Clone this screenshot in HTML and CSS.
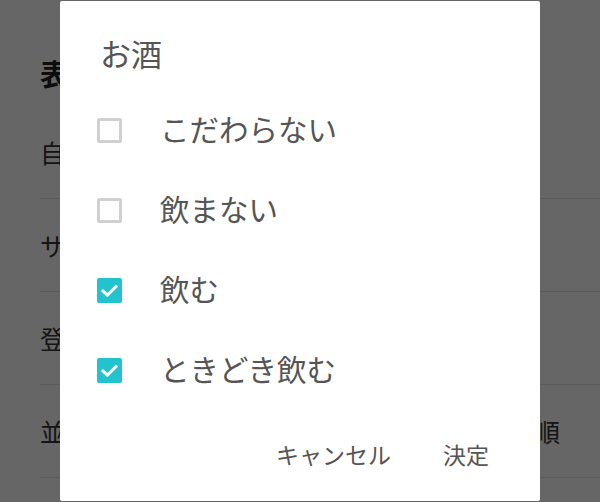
FILE: index.html
```html
<!DOCTYPE html>
<html lang="ja">
<head>
  <meta charset="UTF-8">
  <meta name="viewport" content="width=device-width, initial-scale=1.0">
  <title>お酒</title>
  <link rel="stylesheet" href="styles.css">
</head>
<body>
  <div class="page">
    <h2 class="page-title">表示</h2>
    <ul class="settings">
      <li class="setting"><span>自動ログイン</span></li>
      <li class="setting"><span>サウンド</span></li>
      <li class="setting"><span>登録情報</span></li>
      <li class="setting"><span>並び順</span><span class="value">新着順</span></li>
    </ul>
  </div>

  <div class="overlay">
    <div class="dialog">
      <h3 class="dialog-title">お酒</h3>
      <ul class="options">
        <li class="option">
          <span class="box"></span>
          <span class="label">こだわらない</span>
        </li>
        <li class="option">
          <span class="box"></span>
          <span class="label">飲まない</span>
        </li>
        <li class="option">
          <span class="box checked">
            <svg viewBox="0 0 25 25" width="25" height="25"><path d="M5.8 12.8 L10.4 17.2 L19.2 8.4" fill="none" stroke="#fff" stroke-width="3" stroke-linecap="round" stroke-linejoin="round"/></svg>
          </span>
          <span class="label">飲む</span>
        </li>
        <li class="option">
          <span class="box checked">
            <svg viewBox="0 0 25 25" width="25" height="25"><path d="M5.8 12.8 L10.4 17.2 L19.2 8.4" fill="none" stroke="#fff" stroke-width="3" stroke-linecap="round" stroke-linejoin="round"/></svg>
          </span>
          <span class="label">ときどき飲む</span>
        </li>
      </ul>
      <div class="actions">
        <button type="button" class="action">キャンセル</button>
        <button type="button" class="action">決定</button>
      </div>
    </div>
  </div>
</body>
</html>
```

FILE: styles.css
```css
* { box-sizing: border-box; }
html, body { height: 100%; }
body { margin: 0; background: #fff; font-family: "Noto Sans CJK JP", "Noto Sans", sans-serif; color: #333; overflow: hidden; }

/* page behind the dialog */
.page { padding-top: 53px; }
.page-title { margin: 0 0 13px; padding-left: 40px; font-size: 29px; line-height: 40px; font-weight: bold; color: #222; }
.settings { list-style: none; margin: 0 0 0 40px; padding: 0; }
.setting { display: flex; justify-content: space-between; align-items: center; height: 93px; padding: 0 40px 0 0; border-bottom: 1px solid #e4e4e4; font-size: 25px; }

/* dialog */
.overlay { position: fixed; inset: 0; background: rgba(0, 0, 0, 0.6); display: flex; align-items: center; justify-content: center; }
.dialog { width: 480px; height: 500px; background: #fff; border-radius: 2px; color: #555; }
.dialog-title { margin: 0; padding: 37px 40px 0; font-size: 31px; line-height: 30px; font-weight: normal; }
.options { list-style: none; margin: 22px 0 0; padding: 0; }
.option { display: flex; align-items: center; height: 80px; padding-left: 37px; }
.box { width: 25px; height: 25px; border: 3px solid #d0d0d0; border-radius: 2px; flex-shrink: 0; }
.box.checked { border: none; background: #22c3ce; }
.box svg { display: block; }
.label { margin-left: 38px; padding-bottom: 4px; font-size: 29.5px; line-height: 30px; }
.actions { display: flex; justify-content: flex-end; gap: 52px; margin-top: 29px; padding-right: 51px; }
.action { padding: 0; border: none; background: none; font-family: inherit; font-size: 23px; line-height: 30px; color: #555; }
```
